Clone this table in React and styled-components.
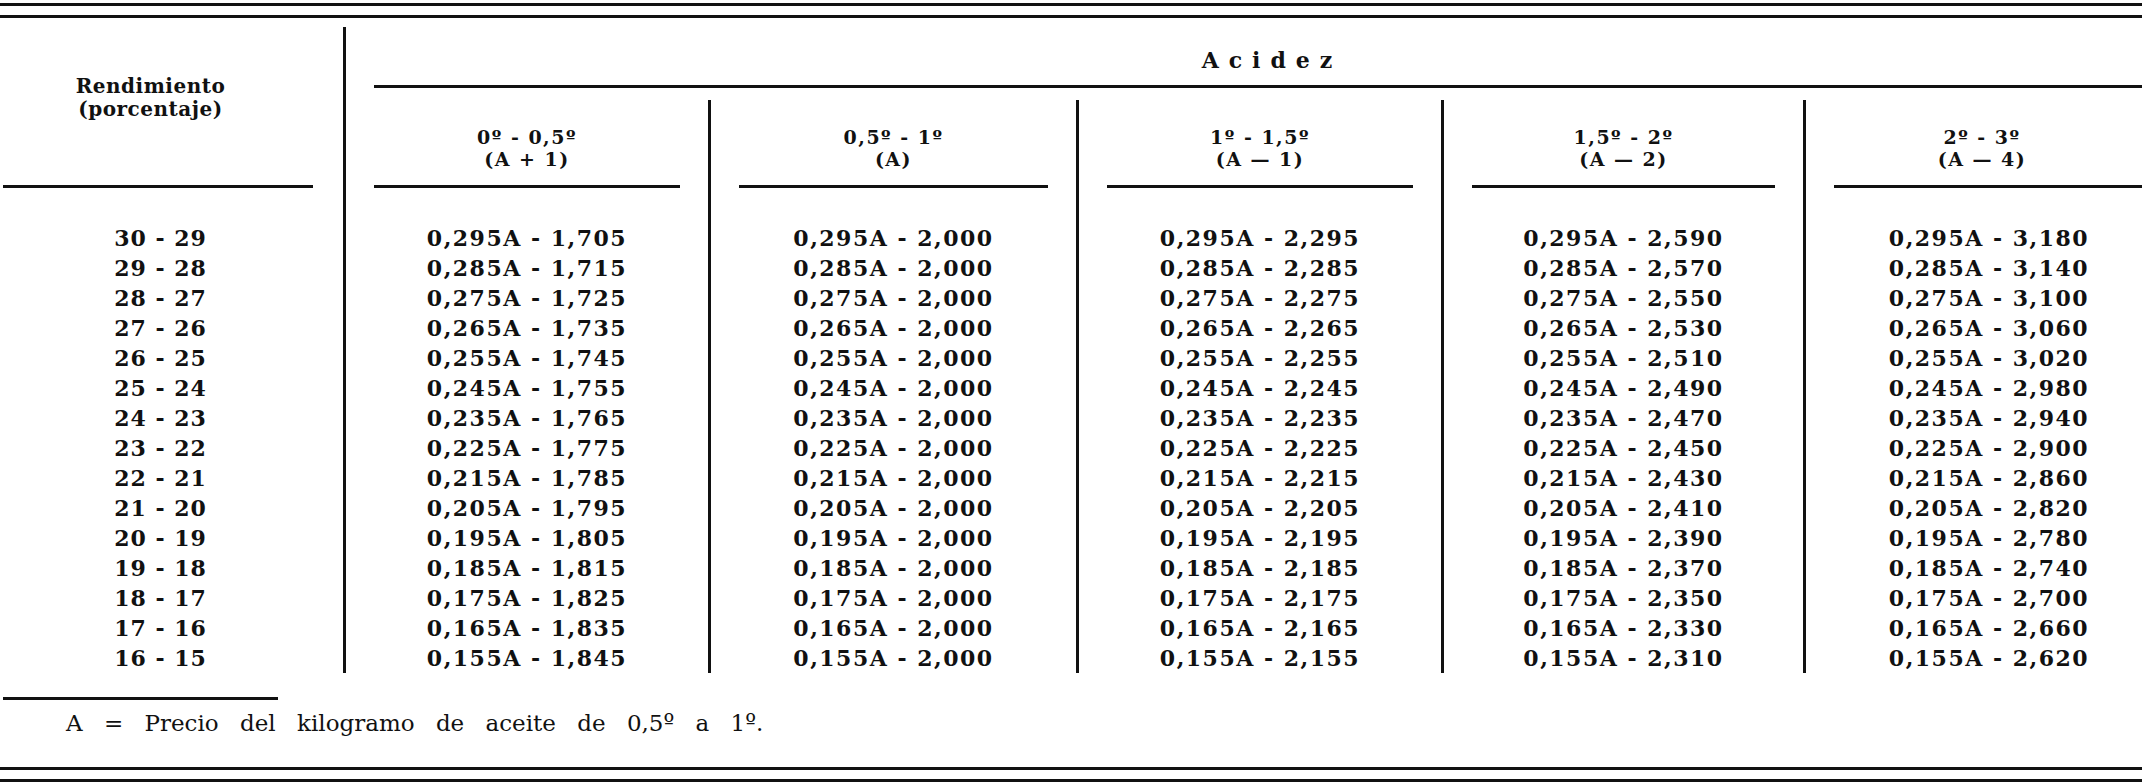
import React from 'react';
import styled, { createGlobalStyle } from 'styled-components';

const GlobalStyle = createGlobalStyle`
  html, body {
    margin: 0;
    padding: 0;
    background: #fff;
    overflow: hidden;
  }
  body {
    font-family: "DejaVu Serif", "Liberation Serif", serif;
    color: #111;
  }
`;

const Page = styled.div`
  width: 2146px;
  padding-top: 3px;
`;

const Rule = styled.div`
  height: ${(p) => p.thick || 3}px;
  background: #111;
  margin-left: ${(p) => p.left || 0}px;
  margin-right: ${(p) => p.right || 0}px;
  width: ${(p) => (p.width ? `${p.width}px` : 'auto')};
`;

const DoubleRule = styled.div`
  display: flex;
  flex-direction: column;
  gap: 9px;
  margin-right: 4px;
`;

const Table = styled.div`
  display: flex;
  margin-top: 9px;
`;

const LeftCol = styled.div`
  width: 343px;
  flex-shrink: 0;
`;

const LeftHead = styled.div`
  box-sizing: border-box;
  height: 158px;
  padding: 48px 42px 0 0;
  text-align: center;
  font-weight: bold;
  font-size: 20px;
  line-height: 23px;
  letter-spacing: 0.5px;
`;

const RightCol = styled.div`
  flex: 1;
  border-left: 3px solid #111;
`;

const AcidezHead = styled.div`
  box-sizing: border-box;
  height: 58px;
  padding: 21px 0 0 52px;
  text-align: center;
  font-weight: bold;
  font-size: 22px;
  line-height: 24px;
  letter-spacing: 10px;
`;

const SubGrid = styled.div`
  display: grid;
  grid-template-columns: 362px 368px 365px 362px 1fr;
  margin-top: 12px;
`;

const SubCol = styled.div`
  display: flex;
  flex-direction: column;
  border-left: ${(p) => (p.first ? 'none' : '3px solid #111')};
`;

const SubHead = styled.div`
  box-sizing: border-box;
  height: 85px;
  padding-top: 26px;
  padding-left: ${(p) => p.shift || 0}px;
  text-align: center;
  font-weight: bold;
  font-size: 19px;
  line-height: 22px;
  letter-spacing: 1.5px;
`;

const Body = styled.div`
  padding: 35px ${(p) => p.padRight || 0}px 0 ${(p) => p.shift || 0}px;
  text-align: center;
  font-weight: bold;
  font-size: 22px;
  line-height: 30px;
  letter-spacing: ${(p) => p.spacing}px;
  white-space: nowrap;
`;

const Footnote = styled.div`
  margin-top: 24px;
`;

const NoteText = styled.p`
  margin: 10px 0 0;
  padding-left: 66px;
  font-size: 23px;
  line-height: 26px;
  word-spacing: 14px;
`;

const BottomRules = styled(DoubleRule)`
  margin-top: 31px;
`;

const fmt = (n) => n.toFixed(3).replace('.', ',');

const rows = Array.from({ length: 15 }, (_, i) => {
  const coef = `${fmt(0.295 - 0.01 * i)}A`;
  return {
    range: `${30 - i} - ${29 - i}`,
    values: [
      `${coef} - ${fmt(1.705 + 0.01 * i)}`,
      `${coef} - 2,000`,
      `${coef} - ${fmt(2.295 - 0.01 * i)}`,
      `${coef} - ${fmt(2.59 - 0.02 * i)}`,
      `${coef} - ${fmt(3.18 - 0.04 * i)}`,
    ],
  };
});

const columns = [
  ['0º - 0,5º', '(A + 1)'],
  ['0,5º - 1º', '(A)'],
  ['1º - 1,5º', '(A — 1)'],
  ['1,5º - 2º', '(A — 2)'],
  ['2º - 3º', '(A — 4)'],
];

const App = () => {
  return (
    <Page>
      <GlobalStyle />
      <DoubleRule>
        <Rule />
        <Rule />
      </DoubleRule>

      <Table>
        <LeftCol>
          <LeftHead>
            Rendimiento
            <br />
            (porcentaje)
          </LeftHead>
          <Rule left={3} width={310} />
          <Body padRight={22} spacing={1}>
            {rows.map((r) => (
              <div key={r.range}>{r.range}</div>
            ))}
          </Body>
        </LeftCol>

        <RightCol>
          <AcidezHead>Acidez</AcidezHead>
          <Rule left={28} right={4} />
          <SubGrid>
            {columns.map(([range, formula], c) => {
              const last = c === columns.length - 1;
              return (
                <SubCol key={range} first={c === 0}>
                  <SubHead shift={last ? 12 : 0}>
                    {range}
                    <br />
                    {formula}
                  </SubHead>
                  <Rule left={28} right={last ? 4 : 28} />
                  <Body spacing={1.5} shift={last ? 26 : 0}>
                    {rows.map((r) => (
                      <div key={r.range}>{r.values[c]}</div>
                    ))}
                  </Body>
                </SubCol>
              );
            })}
          </SubGrid>
        </RightCol>
      </Table>

      <Footnote>
        <Rule left={3} width={275} />
        <NoteText>A = Precio del kilogramo de aceite de 0,5º a 1º.</NoteText>
      </Footnote>

      <BottomRules>
        <Rule />
        <Rule />
      </BottomRules>
    </Page>
  );
};

export default App;
